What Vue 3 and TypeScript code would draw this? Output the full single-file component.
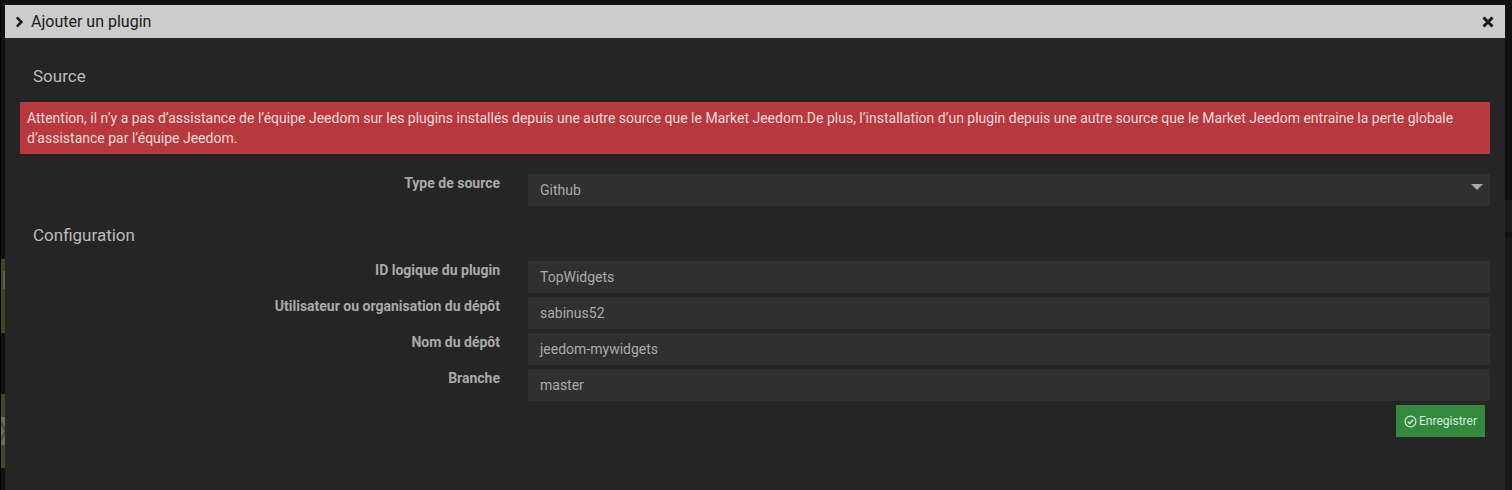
<script setup lang="ts">
interface Field { label: string; value: string }
const fields: Field[] = [
  { label: 'ID logique du plugin', value: 'TopWidgets' },
  { label: 'Utilisateur ou organisation du dépôt', value: 'sabinus52' },
  { label: 'Nom du dépôt', value: 'jeedom-mywidgets' },
  { label: 'Branche', value: 'master' },
]
</script>

<template>
  <div class="page">
    <div class="edge">
      <span class="olive one"><span class="smudge"></span></span>
      <span class="olive two">
        <svg class="arrow" viewBox="0 0 4 28" width="4" height="28"><rect width="4" height="28" fill="#6a6a6a"/><path d="M0 5 4 13 4 15 0 23" fill="none" stroke="#46521e" stroke-width="2"/></svg>
      </span>
    </div>
    <div class="edge-right">
      <span class="band"></span>
      <span class="rest"></span>
    </div>
    <div class="dialog">
      <header class="titlebar">
        <svg class="chev" viewBox="0 0 10 12" width="10" height="12"><path d="M1.8 1.4 6.4 6 1.8 10.6" fill="none" stroke="#1a1a1a" stroke-width="2.5"/></svg>
        <span class="title">Ajouter un plugin</span>
        <svg class="close" viewBox="0 0 12 12" width="12" height="12"><path d="M1.5 1.5 10.5 10.5M10.5 1.5 1.5 10.5" fill="none" stroke="#1a1a1a" stroke-width="3"/></svg>
      </header>
      <div class="content">
        <h4 class="legend first">Source</h4>
        <div class="alert">Attention, il n’y a pas d’assistance de l’équipe Jeedom sur les plugins installés depuis une autre source que le Market Jeedom.De plus, l’installation d’un plugin depuis une autre source que le Market Jeedom entraine la perte globale d’assistance par l’équipe Jeedom.</div>
        <div class="row select-row">
          <label class="label">Type de source</label>
          <div class="control select">Github<span class="caret"></span></div>
        </div>
        <h4 class="legend second">Configuration</h4>
        <div class="fields">
          <div v-for="f in fields" :key="f.label" class="row">
            <label class="label">{{ f.label }}</label>
            <div class="control">{{ f.value }}</div>
          </div>
        </div>
        <div class="actions">
          <button class="save" type="button">
            <svg viewBox="0 0 13 13" width="13" height="13"><circle cx="6.5" cy="6.5" r="5.4" fill="none" stroke="currentColor" stroke-width="1.2"/><path d="M3.8 6.7 5.7 8.6 9.3 4.8" fill="none" stroke="currentColor" stroke-width="1.4"/></svg>
            <span>Enregistrer</span>
          </button>
        </div>
      </div>
    </div>
  </div>
</template>

<style>
html, body { margin: 0; background: #111; }
</style>

<style scoped>
.page {
  position: relative;
  height: 490px;
  width: 1512px;
  overflow: hidden;
  background: #111;
  box-sizing: border-box;
  padding: 5px 7px 0 5px;
  font-family: Roboto, sans-serif;
}
.edge {
  position: absolute;
  left: 0;
  top: 0;
  width: 1px;
  height: 490px;
  background: #000;
}
.olive {
  position: absolute;
  left: 1px;
  width: 4px;
  background: #3e4a10;
}
.one { top: 259px; height: 74px; }
.two { top: 394px; height: 74px; background: #3f4b18; }
.smudge {
  position: absolute;
  left: 2px;
  top: 12px;
  width: 2px;
  height: 18px;
  background: #5b6348;
}
.arrow {
  position: absolute;
  left: 0;
  top: 23px;
  display: block;
}
.edge-right {
  position: absolute;
  left: 1505px;
  top: 200px;
  width: 7px;
  height: 290px;
  display: flex;
  flex-direction: column;
}
.band { height: 32px; background: #1a1a1a; }
.rest { flex: 1; margin-top: 5px; background: #181818; }
.dialog {
  position: relative;
  height: 485px;
  background: #252525;
  display: flex;
  flex-direction: column;
}
.titlebar {
  height: 33px;
  background: #cccccc;
  display: flex;
  align-items: center;
  padding: 0 11px 0 10px;
  color: #1a1a1a;
  flex: none;
}
.chev { margin-right: 6px; }
.title { font-size: 16px; flex: 1; line-height: 33px; }
.close { margin-top: 1px; }
.content {
  padding: 0 15px;
  flex: 1;
}
.legend {
  margin: 0;
  padding-left: 13px;
  font-weight: 400;
  font-size: 17px;
  line-height: 20px;
  color: #bbbbbb;
}
.first { padding-top: 28px; height: 36px; }
.second { margin-top: 19px; height: 36px; }
.alert {
  background: #b7393e;
  color: #f1dada;
  font-size: 14px;
  line-height: 20px;
  padding: 6px 7px;
  height: 40px;
}
.select-row { margin-top: 20px; }
.fields { display: flex; flex-direction: column; gap: 4px; }
.row { display: flex; }
.label {
  width: 480px;
  flex: none;
  text-align: right;
  font-size: 14px;
  font-weight: 700;
  line-height: 20px;
  height: 20px;
  margin-top: -1px;
  color: #aaaaaa;
  box-sizing: border-box;
}
.control {
  position: relative;
  width: 963px;
  height: 32px;
  margin-left: 28px;
  background: #303030;
  color: #aaaaaa;
  font-size: 14px;
  line-height: 32px;
  padding-left: 12px;
  box-sizing: border-box;
}
.caret {
  position: absolute;
  right: 7px;
  top: 10px;
  width: 0;
  height: 0;
  border-left: 6px solid transparent;
  border-right: 6px solid transparent;
  border-top: 6px solid #aaaaaa;
}
.actions {
  display: flex;
  justify-content: flex-end;
  padding: 4px 5px 0 0;
}
.save {
  width: 89px;
  height: 32px;
  border: 0;
  padding: 0;
  background: #338a3e;
  color: #d8eedd;
  font-family: Roboto, sans-serif;
  font-size: 12px;
  display: flex;
  align-items: center;
  justify-content: center;
  gap: 2px;
}
</style>
